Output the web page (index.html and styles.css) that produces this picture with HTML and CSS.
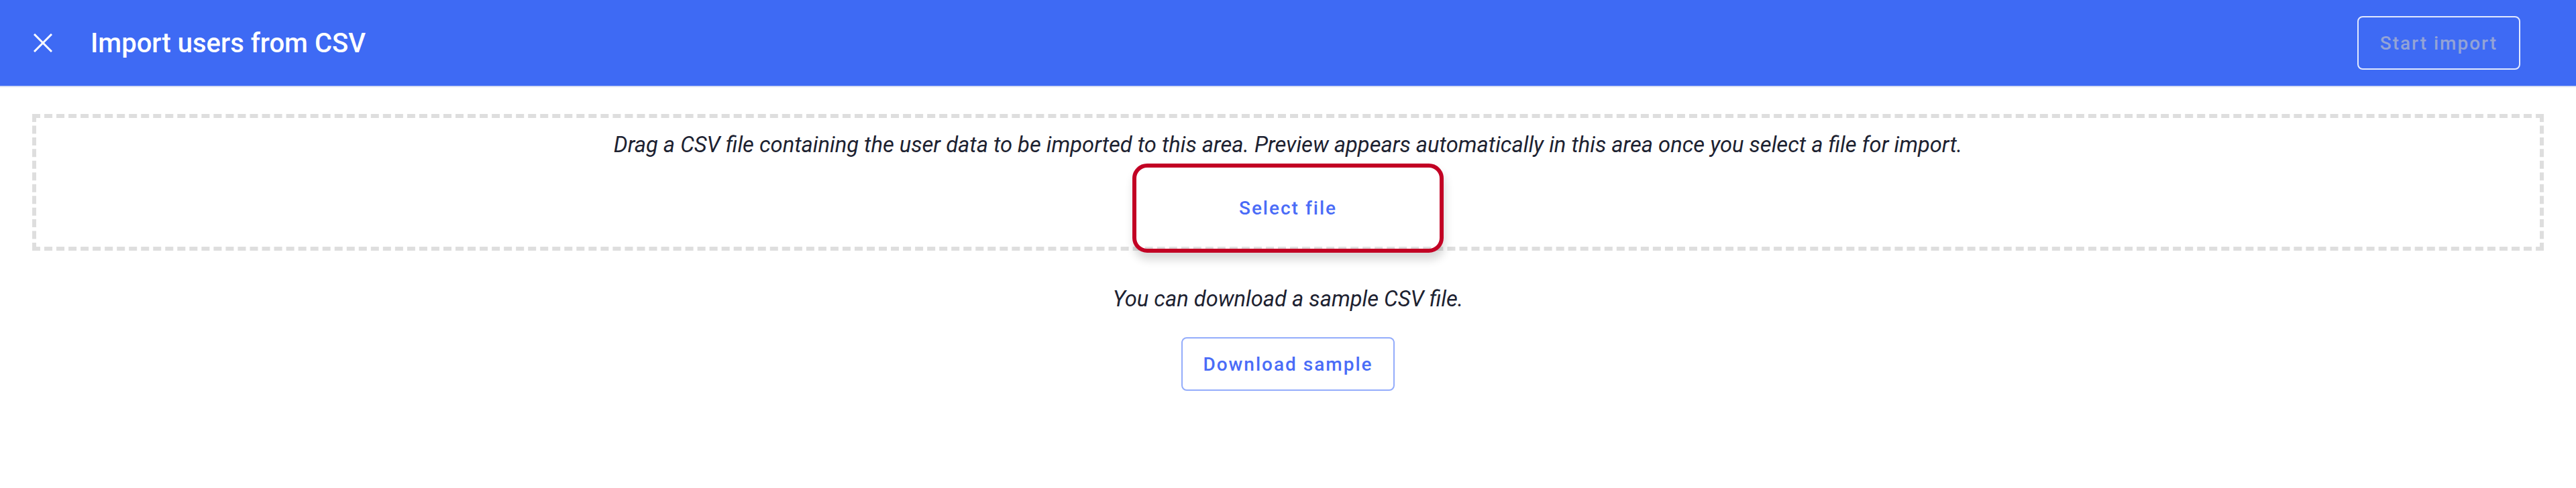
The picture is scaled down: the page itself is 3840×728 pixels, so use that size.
FILE: index.html
```html
<!DOCTYPE html>
<html lang="en">
<head>
  <meta charset="UTF-8" />
  <meta name="viewport" content="width=device-width, initial-scale=1.0" />
  <title>Import users from CSV</title>
  <link rel="stylesheet" href="styles.css">
</head>
<body>
  <header class="topbar">
    <button class="close-btn" aria-label="Close">
      <svg width="28" height="28" viewBox="0 0 28 28">
        <path d="M1 1 L27 27 M27 1 L1 27" stroke="#fff" stroke-width="3" fill="none" />
      </svg>
    </button>
    <h1 class="title">Import users from CSV</h1>
    <button class="start-btn" disabled>Start import</button>
  </header>

  <main class="content">
    <div class="dropzone">
      <p class="hint">Drag a CSV file containing the user data to be imported to this area. Preview appears automatically in this area once you select a file for import.</p>
      <button class="select-btn">Select file</button>
    </div>

    <p class="hint sample-hint">You can download a sample CSV file.</p>
    <button class="outline-btn">Download sample</button>
  </main>
</body>
</html>
```

FILE: styles.css
```css
body {
  margin: 0;
  font-family: Roboto, "Liberation Sans", sans-serif;
  background-color: #fff;
}

.topbar {
  height: 128px;
  background-color: #3e6af4;
  border-bottom: 2px solid #d6ddf2;
  display: flex;
  align-items: center;
  padding: 0 83px 0 50px;
}
.close-btn {
  background: none;
  border: none;
  padding: 0;
  width: 28px;
  height: 28px;
  display: flex;
  cursor: pointer;
}
.title {
  margin: 0 0 0 57px;
  font-size: 40px;
  font-weight: 500;
  color: #fff;
  flex: 1;
}
.start-btn {
  height: 80px;
  padding: 0 32px;
  background: transparent;
  border: 2px solid rgba(255, 255, 255, 0.85);
  border-radius: 8px;
  font-family: Roboto, sans-serif;
  font-size: 28px;
  font-weight: 500;
  letter-spacing: 2px;
  color: #93a3d6;
}

.content {
  padding: 40px 48px 0;
  text-align: center;
}
.dropzone {
  border: 6px dashed #dedede;
  padding: 21px 0 0;
}
.hint {
  margin: 0;
  font-size: 32.7px;
  line-height: 38px;
  font-style: italic;
  color: #1d2231;
}
.select-btn {
  display: block;
  width: 464px;
  height: 133px;
  margin: 9px auto -9px;
  background: transparent;
  border: 6px solid #c20024;
  border-radius: 22px;
  box-shadow: 2px 10px 14px rgba(0, 0, 0, 0.16);
  font-family: Roboto, sans-serif;
  font-size: 28px;
  font-weight: 500;
  letter-spacing: 2px;
  color: #4a6cf7;
  cursor: pointer;
}
.sample-hint {
  margin-top: 53px;
}
.outline-btn {
  margin-top: 38px;
  height: 80px;
  padding: 0 30px;
  background: #fff;
  border: 2px solid #93acfb;
  border-radius: 8px;
  font-family: Roboto, sans-serif;
  font-size: 28px;
  font-weight: 500;
  letter-spacing: 2px;
  color: #4a6cf7;
  cursor: pointer;
}
```
